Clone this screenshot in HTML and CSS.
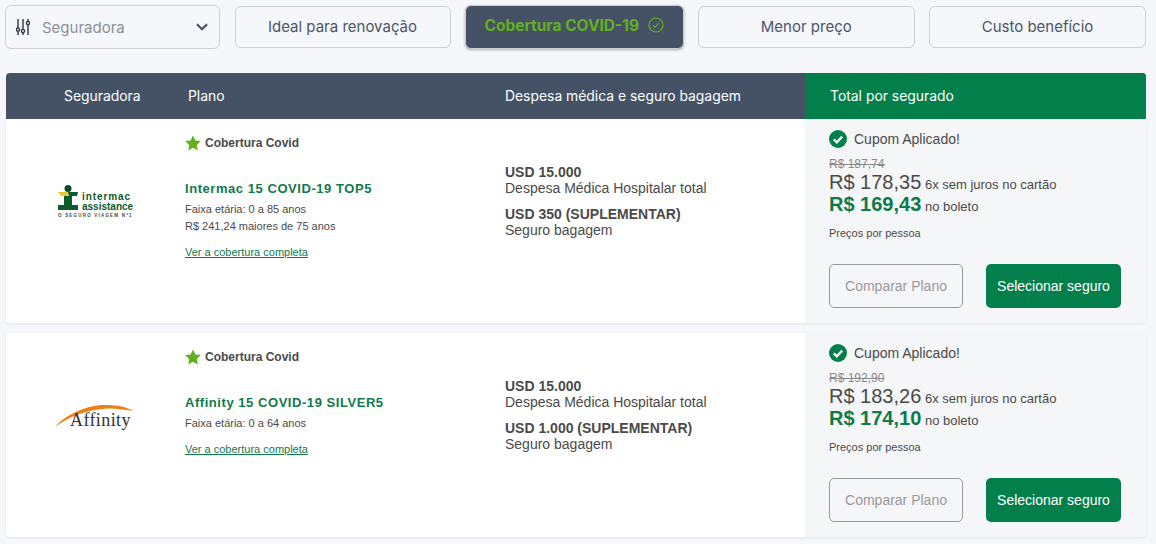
FILE: index.html
```html
<!DOCTYPE html>
<html lang="pt-BR">
<head>
  <meta charset="UTF-8" />
  <title>Comparar seguros</title>
  <link rel="stylesheet" href="styles.css">
</head>
<body>

<!-- Filtros -->
<nav class="filtros">
  <div class="select-seguradora">
    <svg width="14" height="16" viewBox="0 0 14 16" fill="none" stroke="#2d3748" stroke-width="1.4">
      <path d="M2 0v16M7 0v16M12 0v16" />
      <circle cx="2" cy="10.5" r="1.6" fill="#f5f7fa" />
      <circle cx="7" cy="12" r="1.6" fill="#f5f7fa" />
      <circle cx="12" cy="4" r="1.6" fill="#f5f7fa" />
    </svg>
    <span class="select-texto">Seguradora</span>
    <svg width="12" height="8" viewBox="0 0 12 8" fill="none" stroke="#4a5568" stroke-width="2.2">
      <path d="M1 1.2l5 5 5-5" />
    </svg>
  </div>
  <button class="filtro">Ideal para renovação</button>
  <button class="filtro ativo">
    Cobertura COVID-19
    <svg width="16" height="16" viewBox="0 0 16 16" fill="none" stroke="#62b01e" stroke-width="1.2">
      <circle cx="8" cy="8" r="7" />
      <path d="M4.8 8.2l2.2 2.2 4-4.2" />
    </svg>
  </button>
  <button class="filtro">Menor preço</button>
  <button class="filtro">Custo benefício</button>
</nav>

<!-- Cabecalho da tabela -->
<div class="tabela-head">
  <div class="head-seguradora">Seguradora</div>
  <div class="head-plano">Plano</div>
  <div>Despesa médica e seguro bagagem</div>
  <div class="head-total">Total por segurado</div>
</div>

<!-- Plano 1 -->
<article class="plano">
  <div class="plano-logo">
    <div class="logo-intermac">
      <svg width="24" height="25" viewBox="0 0 24 25">
        <circle cx="10" cy="3.5" r="3.5" fill="#0d4a26" />
        <path d="M0 7h10l1 4H3z" fill="#e9c92c" />
        <path d="M10 7h10l-1 4h-5v9h6v5H0v-5h6v-9h5z" fill="#0d5a2c" />
      </svg>
      <div class="logo-nome"><span class="logo-linha1">intermac</span><br>assistance</div>
      <div class="logo-slogan">O SEGURO VIAGEM Nº1</div>
    </div>
  </div>
  <div class="plano-info">
    <div class="selo">
      <svg width="16" height="16" viewBox="0 0 16 16"><path d="M8 .4l2.4 5 5.4.7-4 3.8 1 5.5L8 12.8l-4.8 2.6 1-5.5-4-3.8 5.4-.7z" fill="#62b01e" /></svg>
      Cobertura Covid
    </div>
    <h3 class="plano-nome">Intermac 15 COVID-19 TOP5</h3>
    <p class="plano-detalhe">Faixa etária: 0 a 85 anos</p>
    <p class="plano-detalhe">R$ 241,24 maiores de 75 anos</p>
    <a class="plano-link" href="#">Ver a cobertura completa</a>
  </div>
  <div class="plano-despesa">
    <strong>USD 15.000</strong>
    <span>Despesa Médica Hospitalar total</span>
    <strong class="segundo">USD 350 (SUPLEMENTAR)</strong>
    <span>Seguro bagagem</span>
  </div>
  <div class="plano-preco">
    <div class="cupom">
      <svg width="18" height="18" viewBox="0 0 18 18"><circle cx="9" cy="9" r="9" fill="#037f4b" /><path d="M4.8 9.3l3 3 5.4-5.6" fill="none" stroke="#fff" stroke-width="2.4" /></svg>
      Cupom Aplicado!
    </div>
    <div class="preco-antigo">R$ 187,74</div>
    <div class="preco-linha"><span class="preco-cartao">R$ 178,35</span> 6x sem juros no cartão</div>
    <div class="preco-linha"><span class="preco-boleto">R$ 169,43</span> no boleto</div>
    <div class="preco-nota">Preços por pessoa</div>
    <div class="preco-botoes">
      <button class="btn-comparar">Comparar Plano</button>
      <button class="btn-selecionar">Selecionar seguro</button>
    </div>
  </div>
</article>

<!-- Plano 2 -->
<article class="plano">
  <div class="plano-logo">
    <div class="logo-affinity">
      <svg width="80" height="24" viewBox="0 0 80 24"><path d="M0 23C12 9 34 1 50 1 62 1 72 3 78 7 66 5 56 4 48 5 30 6 12 14 0 23z" fill="#f07f13" /></svg>
      <span class="affinity-nome">Affinity</span>
    </div>
  </div>
  <div class="plano-info">
    <div class="selo">
      <svg width="16" height="16" viewBox="0 0 16 16"><path d="M8 .4l2.4 5 5.4.7-4 3.8 1 5.5L8 12.8l-4.8 2.6 1-5.5-4-3.8 5.4-.7z" fill="#62b01e" /></svg>
      Cobertura Covid
    </div>
    <h3 class="plano-nome">Affinity 15 COVID-19 SILVER5</h3>
    <p class="plano-detalhe">Faixa etária: 0 a 64 anos</p>
    <a class="plano-link" href="#">Ver a cobertura completa</a>
  </div>
  <div class="plano-despesa">
    <strong>USD 15.000</strong>
    <span>Despesa Médica Hospitalar total</span>
    <strong class="segundo">USD 1.000 (SUPLEMENTAR)</strong>
    <span>Seguro bagagem</span>
  </div>
  <div class="plano-preco">
    <div class="cupom">
      <svg width="18" height="18" viewBox="0 0 18 18"><circle cx="9" cy="9" r="9" fill="#037f4b" /><path d="M4.8 9.3l3 3 5.4-5.6" fill="none" stroke="#fff" stroke-width="2.4" /></svg>
      Cupom Aplicado!
    </div>
    <div class="preco-antigo">R$ 192,90</div>
    <div class="preco-linha"><span class="preco-cartao">R$ 183,26</span> 6x sem juros no cartão</div>
    <div class="preco-linha"><span class="preco-boleto">R$ 174,10</span> no boleto</div>
    <div class="preco-nota">Preços por pessoa</div>
    <div class="preco-botoes">
      <button class="btn-comparar">Comparar Plano</button>
      <button class="btn-selecionar">Selecionar seguro</button>
    </div>
  </div>
</article>

</body>
</html>
```

FILE: styles.css
```css
* {
  box-sizing: border-box;
}

body {
  margin: 0;
  padding: 5px 10px 0 6px;
  background: #f5f7fa;
  color: #4a4a4a;
  font-family: "Liberation Sans", Arial, sans-serif;
}

/* Filtros */
.filtros {
  display: grid;
  grid-template-columns: 215px 216px 218.5px 216.5px 217px;
  column-gap: 14.5px;
  align-items: center;
  height: 44px;
  margin-left: -1px;
}

.select-seguradora {
  height: 44px;
  display: flex;
  align-items: center;
  padding: 0 11px 0 10px;
  border: 1px solid #cbd0d8;
  border-radius: 6px;
  color: #8c9097;
  font: 15px Inter, sans-serif;
}

.select-texto {
  flex-grow: 1;
  margin-left: 12px;
}

.filtro {
  height: 42px;
  display: flex;
  align-items: center;
  justify-content: center;
  gap: 9px;
  background: transparent;
  border: 1px solid #cbd0d8;
  border-radius: 6px;
  color: #4a5568;
  font: 15px Inter, sans-serif;
  padding: 0 0 2px;
}

.filtro.ativo {
  height: 44px;
  background: #455266;
  color: #62b01e;
  font-weight: 700;
  font-size: 15.5px;
  box-shadow: 0 1px 3px rgba(0,0,0,0.3);
  padding-bottom: 4px;
}

/* Tabela */
.tabela-head,
.plano {
  display: grid;
  grid-template-columns: 169px 330px 300px 341px;
}

.tabela-head {
  margin-top: 24px;
  height: 46px;
  background: #455266;
  color: #fff;
  font: 400 13.9px/46px Inter, sans-serif;
  border-radius: 4px 4px 0 0;
  overflow: hidden;
}

.head-seguradora {
  padding-left: 58px;
  white-space: nowrap;
}

.head-plano {
  padding-left: 13px;
}

.head-total {
  padding-left: 25px;
  background: #037f4b;
}

.plano {
  height: 204px;
  margin-bottom: 10px;
  background: #fff;
  border-radius: 0 0 4px 4px;
  box-shadow: 0 1px 3px rgba(0,0,0,0.08);
  overflow: hidden;
}

.plano + .plano {
  border-radius: 4px;
}

/* Logos */
.plano-logo {
  padding: 66px 0 0 52px;
}

.logo-intermac {
  display: grid;
  grid-template-columns: 24px 50px;
  row-gap: 1px;
  color: #0d5a2c;
}

.logo-nome {
  font-weight: bold;
  font-size: 10px;
  line-height: 10px;
  padding-top: 7px;
  white-space: nowrap;
}

.logo-linha1 {
  letter-spacing: 0.9px;
}

.logo-slogan {
  grid-column: 1 / 3;
  font-size: 4.5px;
  font-weight: bold;
  letter-spacing: 1.2px;
  line-height: 5px;
  color: #3d4a40;
  white-space: nowrap;
}

.logo-affinity {
  position: relative;
  width: 80px;
  height: 24px;
  margin: 5px 0 0 -3px;
}

.affinity-nome {
  position: absolute;
  left: 15px;
  top: 6px;
  font: 18px/20px "Liberation Serif", serif;
  letter-spacing: 0.4px;
  color: #333;
}

/* Plano */
.plano-info {
  padding: 16px 0 0 10px;
}

.selo {
  display: flex;
  align-items: center;
  gap: 4px;
  height: 16px;
  font-size: 12px;
  font-weight: bold;
}

.plano-nome {
  margin: 30px 0 6px;
  font-size: 13px;
  line-height: 16px;
  letter-spacing: 0.55px;
  color: #0f7a4b;
}

.plano-detalhe {
  margin: 0 0 5px;
  font-size: 11px;
  line-height: 12px;
}

.plano-link {
  display: inline-block;
  margin-top: 8px;
  font-size: 11px;
  line-height: 14px;
  color: #0f7a4b;
}

.plano-despesa {
  display: flex;
  flex-direction: column;
  padding-top: 45px;
  font-size: 14px;
  line-height: 16px;
}

.segundo {
  margin-top: 10px;
}

/* Preco */
.plano-preco {
  padding: 11px 25px 0 24px;
  background: #f5f6f8;
}

.cupom {
  display: flex;
  align-items: center;
  gap: 7px;
  height: 18px;
  font-size: 14px;
}

.preco-antigo {
  margin-top: 9px;
  font-size: 12px;
  line-height: 14px;
  color: #8a8a8a;
  text-decoration: line-through;
}

.preco-linha {
  height: 22px;
  font-size: 13px;
  line-height: 22px;
  white-space: nowrap;
}

.preco-cartao {
  font-size: 20px;
}

.preco-boleto {
  font-size: 20px;
  font-weight: bold;
  color: #0f7a4b;
}

.preco-nota {
  margin-top: 11px;
  font-size: 11px;
  line-height: 14px;
}

.preco-botoes {
  display: flex;
  gap: 23px;
  margin-top: 24px;
}

.preco-botoes button {
  width: 134px;
  height: 44px;
  border-radius: 5px;
  font: 14px "Liberation Sans", Arial, sans-serif;
  padding: 0;
}

.preco-botoes .btn-selecionar {
  width: 135px;
}

.btn-comparar {
  background: transparent;
  border: 1px solid #9a9a9a;
  color: #9a9a9a;
}

.btn-selecionar {
  background: #037f4b;
  border: none;
  color: #fff;
}
```
